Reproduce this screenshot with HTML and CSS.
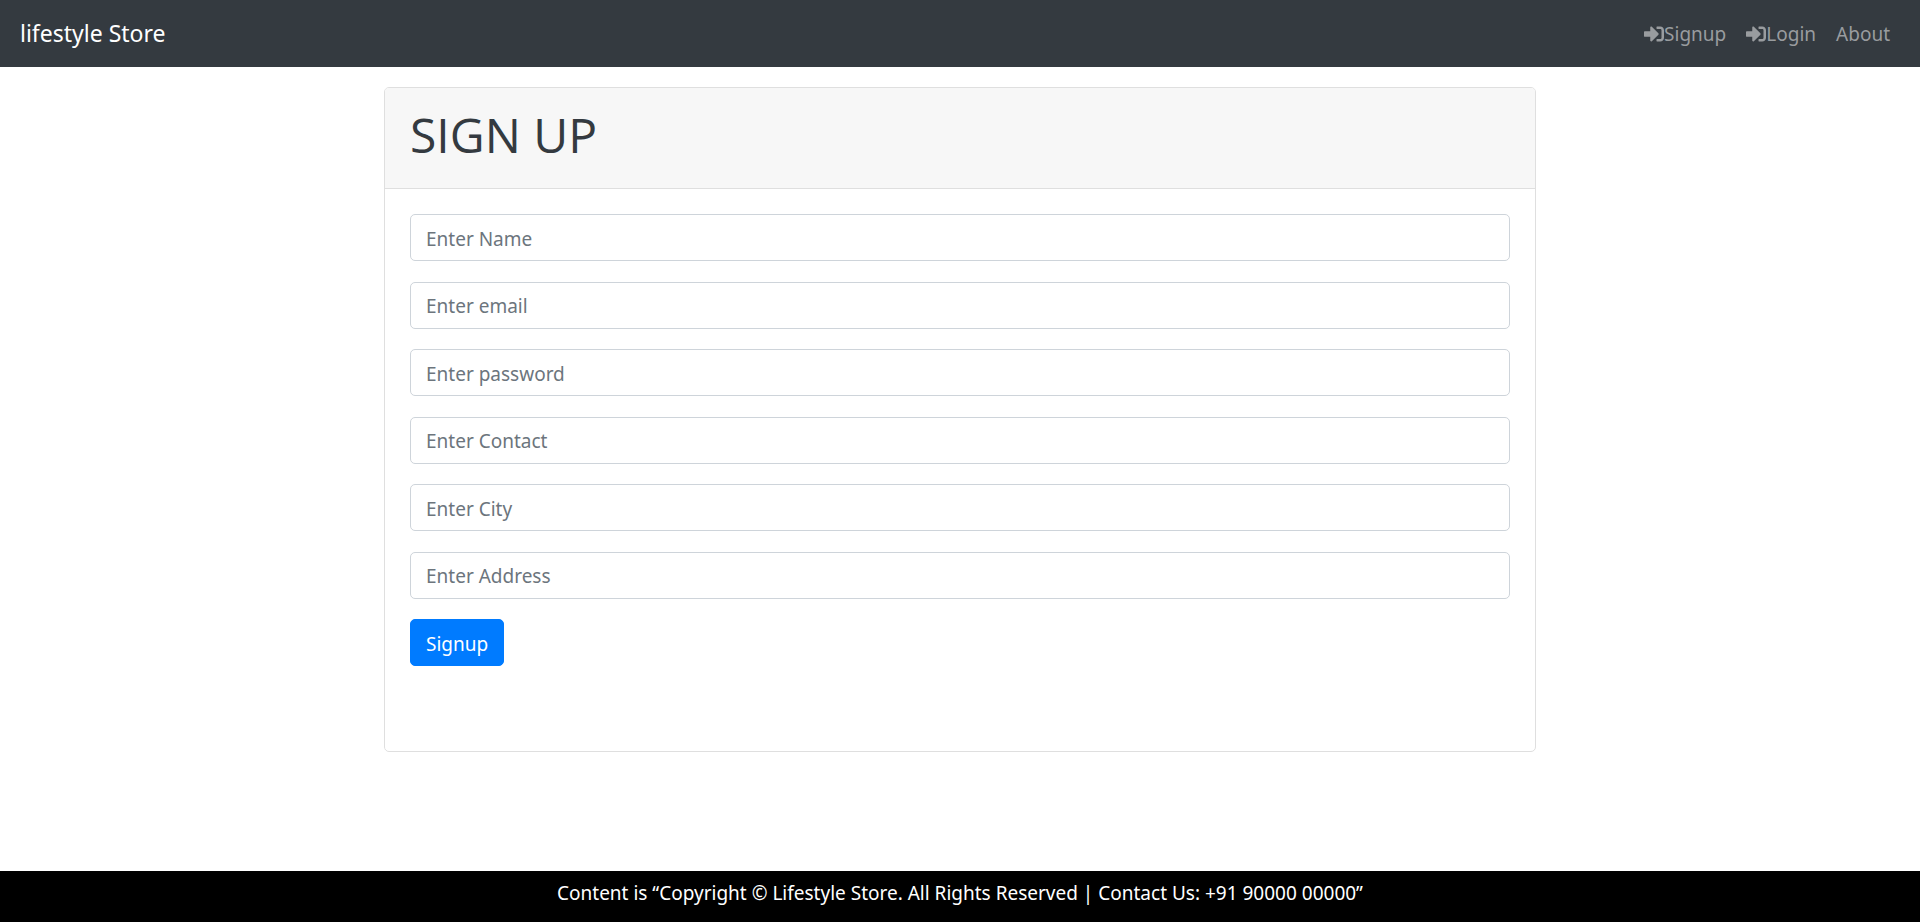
FILE: index.html
```html
<!DOCTYPE html>
<html lang="en">
<head>
<meta charset="utf-8">
<meta name="viewport" content="width=device-width, initial-scale=1">
<title>lifestyle Store</title>
<link rel="stylesheet" href="styles.css">
</head>
<body>
<nav class="navbar">
  <a class="brand" href="#">lifestyle Store</a>
  <ul class="nav-list">
    <li><a class="nav-link" href="#"><svg class="icon" viewBox="0 0 512 512" aria-hidden="true"><path d="M416 448h-84c-6.600 0-12-5.400-12-12v-40c0-6.600 5.400-12 12-12h84c17.700 0 32-14.300 32-32V160c0-17.700-14.300-32-32-32h-84c-6.600 0-12-5.400-12-12V76c0-6.600 5.400-12 12-12h84c53 0 96 43 96 96v192c0 53-43 96-96 96zm-47-209L201 71c-15-15-41-4.500-41 17v96H24c-13.300 0-24 10.700-24 24v96c0 13.300 10.700 24 24 24h136v96c0 21.500 26 32 41 17l168-168c9.300-9.400 9.300-24.600 0-34z"/></svg>Signup</a></li>
    <li><a class="nav-link" href="#"><svg class="icon" viewBox="0 0 512 512" aria-hidden="true"><path d="M416 448h-84c-6.600 0-12-5.400-12-12v-40c0-6.600 5.400-12 12-12h84c17.700 0 32-14.300 32-32V160c0-17.700-14.300-32-32-32h-84c-6.600 0-12-5.400-12-12V76c0-6.600 5.400-12 12-12h84c53 0 96 43 96 96v192c0 53-43 96-96 96zm-47-209L201 71c-15-15-41-4.500-41 17v96H24c-13.300 0-24 10.700-24 24v96c0 13.300 10.700 24 24 24h136v96c0 21.500 26 32 41 17l168-168c9.300-9.400 9.300-24.600 0-34z"/></svg>Login</a></li>
    <li><a class="nav-link" href="#">About</a></li>
  </ul>
</nav>
<main class="content">
  <section class="card">
    <header class="card-header"><h1 class="title">SIGN UP</h1></header>
    <div class="card-body">
      <form class="form">
        <input class="field" type="text" placeholder="Enter Name" aria-label="Name">
        <input class="field" type="email" placeholder="Enter email" aria-label="Email">
        <input class="field" type="password" placeholder="Enter password" aria-label="Password">
        <input class="field" type="tel" placeholder="Enter Contact" aria-label="Contact">
        <input class="field" type="text" placeholder="Enter City" aria-label="City">
        <input class="field" type="text" placeholder="Enter Address" aria-label="Address">
        <button class="submit" type="submit">Signup</button>
      </form>
    </div>
  </section>
</main>
<footer class="footer">Content is “Copyright © Lifestyle Store. All Rights Reserved | Contact Us: +91 90000 00000”</footer>
</body>
</html>
```
FILE: styles.css
```css
* {
  box-sizing: border-box;
}

body {
  margin: 0;
  min-height: 100vh;
  display: flex;
  flex-direction: column;
  background: #fff;
  color: #212529;
  font-family: "Segoe UI", "Noto Sans", sans-serif;
  font-size: 19px;
  line-height: 30px;
}

.navbar {
  display: flex;
  align-items: center;
  justify-content: space-between;
  padding: 10px 20px;
  background: #343a40;
}

.brand {
  color: #fff;
  font-size: 23px;
  line-height: 47px;
  text-decoration: none;
}

.nav-list {
  display: flex;
  margin: 0;
  padding: 0;
  list-style: none;
}

.nav-link {
  display: flex;
  align-items: center;
  padding: 8px 10px;
  color: #999c9f;
  text-decoration: none;
}

.icon {
  width: 20px;
  height: 20px;
  fill: currentColor;
}

.content {
  flex: 1;
  padding: 20px 0;
}

.card {
  width: 60%;
  margin: 0 auto;
  border: 1px solid #dfdfdf;
  border-radius: 5px;
}

.card-header {
  padding: 17px 25px 23px;
  border-bottom: 1px solid #dfdfdf;
  border-radius: 4px 4px 0 0;
  background: #f7f7f7;
}

.title {
  margin: 0;
  color: #343a40;
  font-family: "Segoe UI", "Open Sans", sans-serif;
  font-size: 48px;
  font-weight: 400;
  line-height: 60px;
}

.card-body {
  padding: 25px 25px 85px;
}

.form {
  display: flex;
  flex-direction: column;
  justify-content: space-between;
  gap: 20px;
  min-height: 452px;
}

.field,
.submit {
  height: 47px;
  padding: 2px 15px 0;
  border: 1px solid #ced4da;
  border-radius: 5px;
  font: inherit;
}

.field {
  width: 100%;
  background: #fff;
  color: #495057;
}

.field::placeholder {
  color: #6c757d;
  opacity: 1;
}

.submit {
  align-self: flex-start;
  border-color: #007bff;
  background: #007bff;
  color: #fff;
}

.footer {
  padding: 7px 20px 14px;
  background: #000;
  color: #fff;
  text-align: center;
}
```
